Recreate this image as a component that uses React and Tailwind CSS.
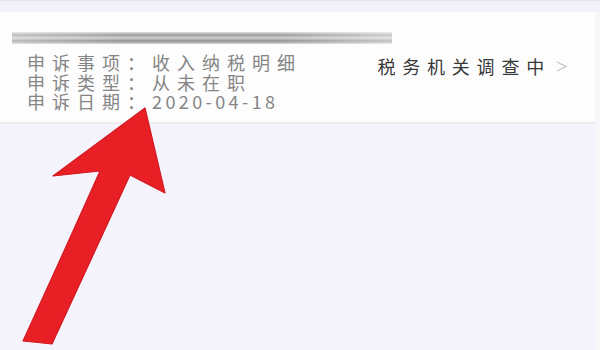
import React from "react";

const rows = [
  { label: "申诉事项：", value: "收入纳税明细" },
  { label: "申诉类型：", value: "从未在职" },
  { label: "申诉日期：", value: "2020-04-18", date: true },
];

const Arrow = () => (
  <svg
    className="absolute left-0 top-0 pointer-events-none"
    width="600"
    height="350"
    viewBox="0 0 600 350"
  >
    <path
      d="M145 108 L165 193 L130 175 Q92 258 52 344 L23 341 Q62 256 100 171 L53 176 Z"
      fill="#e91f26"
      stroke="#d41a22"
      strokeWidth="1.2"
      strokeLinejoin="round"
    />
  </svg>
);

export default function App() {
  return (
    <div
      className="relative w-[600px] h-[350px] overflow-hidden bg-[#f5f4fc]"
      style={{ fontFamily: '"Noto Sans CJK SC", "Noto Sans", sans-serif' }}
    >
      {/* top strip */}
      <div className="h-[12px] border-t border-[#e4e3ee] bg-[#f3f2fa]" />

      {/* Card */}
      <div className="bg-[#fdfdfd] border-b-2 border-[#ececf2] pt-[20px] pb-[10px] pl-[12px] pr-[33px]">
        <div className="relative h-[12px] w-[380px] blur-[0.6px] bg-[linear-gradient(to_bottom,#e2e2e2,#9c9c9c_25%,#d0d0d0_50%,#8f8f8f_75%,#dadada)]">
          <div className="absolute inset-0 bg-[linear-gradient(to_right,rgba(255,255,255,0.35),rgba(255,255,255,0)_30%,rgba(255,255,255,0)_70%,rgba(255,255,255,0.45))]" />
        </div>

        <div className="flex items-start justify-between mt-[9px]">
          <div className="ml-[15px] text-[18px] leading-[19.5px] text-[#858585]">
            {rows.map((r) => (
              <div key={r.label} className="flex whitespace-nowrap">
                <span className="tracking-[7px]">{r.label}</span>
                <span className={r.date ? "tracking-[3.4px]" : "tracking-[7px]"}>
                  {r.value}
                </span>
              </div>
            ))}
          </div>

          <div className="flex items-center gap-[5px] mt-[3px]">
            <span className="text-[18px] leading-[20px] tracking-[6.8px] text-[#383838] whitespace-nowrap">
              税务机关调查中
            </span>
            <svg width="11" height="11" viewBox="0 0 11 11" className="mt-[1px]">
              <polyline
                points="1,1 10,5.5 1,10"
                fill="none"
                stroke="#c4c4c4"
                strokeWidth="1.2"
              />
            </svg>
          </div>
        </div>
      </div>

      <div className="absolute right-0 top-[12px] bottom-0 w-[5px] bg-[#f8f8fb]" />

      <Arrow />
    </div>
  );
}
